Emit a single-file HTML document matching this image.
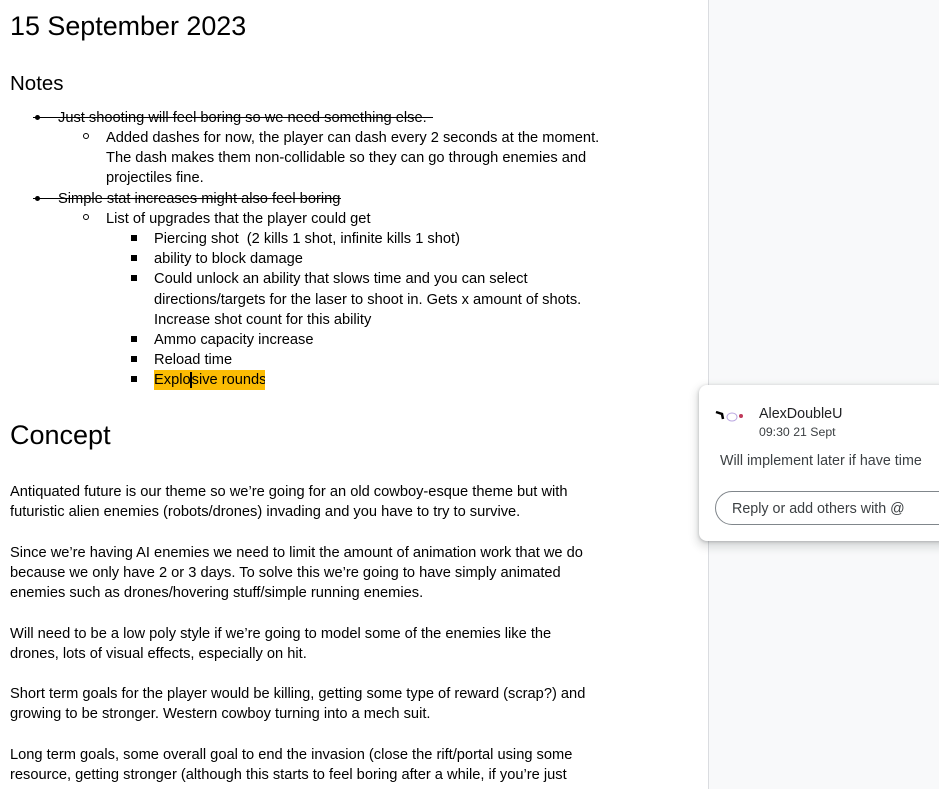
<!DOCTYPE html>
<html><head><meta charset="utf-8"><style>
body{margin:0;width:939px;height:789px;overflow:hidden;background:#fff;font-family:"Liberation Sans",sans-serif;color:#000;position:relative}
.side{position:absolute;left:708px;top:0;width:231px;height:789px;background:#f8f9fa;border-left:1px solid #dadce0}
.t{position:absolute;white-space:nowrap;font-size:14.65px;line-height:20px;margin-top:1px}
.dot{position:absolute;width:5px;height:5px;border-radius:50%;background:#000}
.circ{position:absolute;width:4px;height:4px;border-radius:50%;border:1px solid #000}
.sq{position:absolute;width:6px;height:6px;background:#000}
.card{position:absolute;left:699px;top:385px;width:250px;height:156px;background:#fff;border-radius:8px;box-shadow:0 1px 3px rgba(60,64,67,.3),0 4px 8px 3px rgba(60,64,67,.15)}
</style></head><body>
<div class="side"></div>
<div class="t" style="left:10px;top:8px;font-size:26.9px;line-height:34px">15 September 2023</div>
<div class="t" style="left:10px;top:70px;font-size:20.5px;line-height:26px">Notes</div>
<div class="dot" style="left:35px;top:115px"></div>
<div style="position:absolute;left:33px;top:117px;width:400px;height:1px;background:#000"></div>
<div class="t" style="left:58px;top:107px">Just shooting will feel boring so we need something else.</div>
<div class="circ" style="left:83px;top:133px"></div>
<div class="t" style="left:106px;top:127px">Added dashes for now, the player can dash every 2 seconds at the moment.</div>
<div class="t" style="left:106px;top:147px">The dash makes them non-collidable so they can go through enemies and</div>
<div class="t" style="left:106px;top:167px">projectiles fine.</div>
<div class="dot" style="left:35px;top:196px"></div>
<div style="position:absolute;left:33px;top:198px;width:308px;height:1px;background:#000"></div>
<div class="t" style="left:58px;top:188px">Simple stat increases might also feel boring</div>
<div class="circ" style="left:83px;top:214px"></div>
<div class="t" style="left:106px;top:208px">List of upgrades that the player could get</div>
<div class="sq" style="left:131px;top:235px"></div><div class="t" style="left:154px;top:228px">Piercing shot &nbsp;(2 kills 1 shot, infinite kills 1 shot)</div>
<div class="sq" style="left:131px;top:255px"></div><div class="t" style="left:154px;top:248px">ability to block damage</div>
<div class="sq" style="left:131px;top:275px"></div><div class="t" style="left:154px;top:268px">Could unlock an ability that slows time and you can select</div>
<div class="t" style="left:154px;top:289px">directions/targets for the laser to shoot in. Gets x amount of shots.</div>
<div class="t" style="left:154px;top:309px">Increase shot count for this ability</div>
<div class="sq" style="left:131px;top:336px"></div><div class="t" style="left:154px;top:329px">Ammo capacity increase</div>
<div class="sq" style="left:131px;top:356px"></div><div class="t" style="left:154px;top:349px">Reload time</div>
<div class="sq" style="left:131px;top:376px"></div><div class="t" style="left:154px;top:369px;background:#fbbc04;width:111px;overflow:hidden">Explo<span style="border-left:2px solid #000;margin-left:-1px"></span>sive rounds</div>
<div class="t" style="left:10px;top:416px;font-size:27px;line-height:36px">Concept</div>
<div class="t" style="left:10px;top:481px">Antiquated future is our theme so we’re going for an old cowboy-esque theme but with</div>
<div class="t" style="left:10px;top:501px">futuristic alien enemies (robots/drones) invading and you have to try to survive.</div>
<div class="t" style="left:10px;top:542px">Since we’re having AI enemies we need to limit the amount of animation work that we do</div>
<div class="t" style="left:10px;top:562px">because we only have 2 or 3 days. To solve this we’re going to have simply animated</div>
<div class="t" style="left:10px;top:582px">enemies such as drones/hovering stuff/simple running enemies.</div>
<div class="t" style="left:10px;top:623px">Will need to be a low poly style if we’re going to model some of the enemies like the</div>
<div class="t" style="left:10px;top:643px">drones, lots of visual effects, especially on hit.</div>
<div class="t" style="left:10px;top:683px">Short term goals for the player would be killing, getting some type of reward (scrap?) and</div>
<div class="t" style="left:10px;top:703px">growing to be stronger. Western cowboy turning into a mech suit.</div>
<div class="t" style="left:10px;top:744px">Long term goals, some overall goal to end the invasion (close the rift/portal using some</div>
<div class="t" style="left:10px;top:764px">resource, getting stronger (although this starts to feel boring after a while, if you’re just</div>
<div class="card">
<svg style="position:absolute;left:16px;top:24px" width="32" height="16"><path d="M1 3 L7 5 L8 10" stroke="#000" stroke-width="2.5" fill="none"/><ellipse cx="17" cy="8" rx="5" ry="4" fill="none" stroke="#b9a6e0"/><circle cx="26" cy="7" r="2" fill="#c03a5a"/></svg>
<div class="t" style="left:60px;top:18px;font-size:14.3px;color:#202124">AlexDoubleU</div>
<div class="t" style="left:60px;top:36px;font-size:12.3px;color:#3c4043">09:30 21 Sept</div>
<div class="t" style="left:21px;top:65px;font-size:14.3px;color:#3c4043">Will implement later if have time</div>
<div style="position:absolute;left:16px;top:106px;width:240px;height:32px;border:1px solid #80868b;border-radius:17px"></div>
<div class="t" style="left:33px;top:113px;font-size:14.3px;color:#3c4043">Reply or add others with @</div>
</div>
</body></html>
